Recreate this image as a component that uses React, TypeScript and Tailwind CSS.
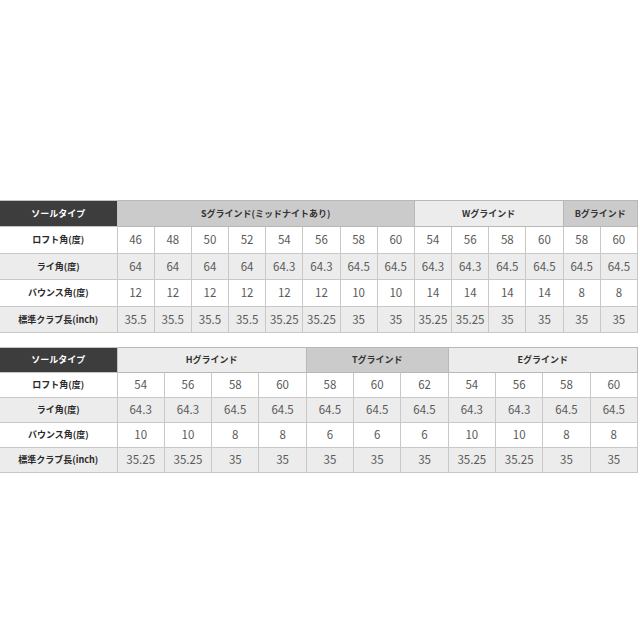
import React from "react";

const font = { fontFamily: '"Noto Sans CJK JP", "Noto Sans", sans-serif' };

type Group = { name: string; tone: "mid" | "light"; cols: number };

function Table({
  groups,
  rows,
  rowH,
}: {
  groups: Group[];
  rows: { label: string; values: string[] }[];
  rowH: string;
}) {
  const total = groups.reduce((a, g) => a + g.cols, 0);
  return (
    <table className="w-[638px] table-fixed border-collapse" style={font}>
      <colgroup>
        <col className="w-[117px]" />
        {Array.from({ length: total }).map((_, i) => (
          <col key={i} />
        ))}
      </colgroup>
      <tbody>
        <tr className={rowH}>
          <td className="bg-[#3d3d3d] text-white text-[9px] font-bold text-center border border-[#c4c4c4] border-l-0">
            ソールタイプ
          </td>
          {groups.map((g) => (
            <td
              key={g.name}
              colSpan={g.cols}
              className={
                "text-[9px] font-bold text-[#333] text-center border border-[#b8b8b8] " +
                (g.tone === "mid" ? "bg-[#cbcbcb]" : "bg-[#ececec]")
              }
            >
              {g.name}
            </td>
          ))}
        </tr>
        {rows.map((r, ri) => (
          <tr key={r.label} className={rowH + " " + (ri % 2 === 1 ? "bg-[#ececec]" : "bg-white")}>
            <td className="text-[9px] font-bold text-[#2a2a2a] text-center border border-[#c8c8c8] border-l-0">
              {r.label}
            </td>
            {r.values.map((v, i) => (
              <td
                key={i}
                className="text-[11.5px] text-[#5a5a5a] text-center border border-[#c8c8c8]"
              >
                {v}
              </td>
            ))}
          </tr>
        ))}
      </tbody>
    </table>
  );
}

export default function App() {
  return (
    <div className="w-[640px] h-[640px] bg-white pt-[200px] flex flex-col gap-[14px]">
      <Table
        rowH="h-[26.4px]"
        groups={[
          { name: "Sグラインド(ミッドナイトあり)", tone: "mid", cols: 8 },
          { name: "Wグラインド", tone: "light", cols: 4 },
          { name: "Bグラインド", tone: "mid", cols: 2 },
        ]}
        rows={[
          { label: "ロフト角(度)", values: ["46", "48", "50", "52", "54", "56", "58", "60", "54", "56", "58", "60", "58", "60"] },
          { label: "ライ角(度)", values: ["64", "64", "64", "64", "64.3", "64.3", "64.5", "64.5", "64.3", "64.3", "64.5", "64.5", "64.5", "64.5"] },
          { label: "バウンス角(度)", values: ["12", "12", "12", "12", "12", "12", "10", "10", "14", "14", "14", "14", "8", "8"] },
          { label: "標準クラブ長(inch)", values: ["35.5", "35.5", "35.5", "35.5", "35.25", "35.25", "35", "35", "35.25", "35.25", "35", "35", "35", "35"] },
        ]}
      />
      <Table
        rowH="h-[25px]"
        groups={[
          { name: "Hグラインド", tone: "light", cols: 4 },
          { name: "Tグラインド", tone: "mid", cols: 3 },
          { name: "Eグラインド", tone: "light", cols: 4 },
        ]}
        rows={[
          { label: "ロフト角(度)", values: ["54", "56", "58", "60", "58", "60", "62", "54", "56", "58", "60"] },
          { label: "ライ角(度)", values: ["64.3", "64.3", "64.5", "64.5", "64.5", "64.5", "64.5", "64.3", "64.3", "64.5", "64.5"] },
          { label: "バウンス角(度)", values: ["10", "10", "8", "8", "6", "6", "6", "10", "10", "8", "8"] },
          { label: "標準クラブ長(inch)", values: ["35.25", "35.25", "35", "35", "35", "35", "35", "35.25", "35.25", "35", "35"] },
        ]}
      />
    </div>
  );
}
